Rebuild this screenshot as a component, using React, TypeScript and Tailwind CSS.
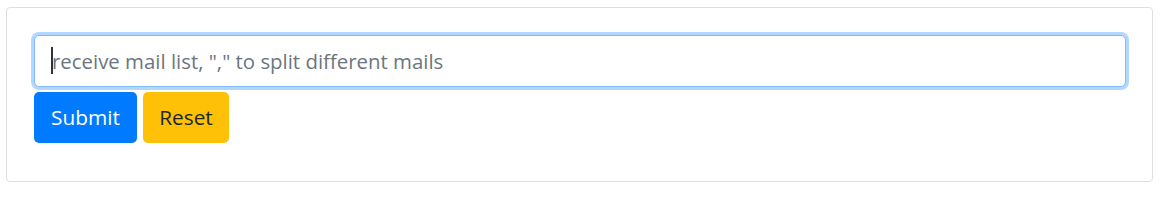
import React from 'react'

const App: React.FC = () => {
  return (
    <div className="w-[1174px] h-[200px] bg-white pt-[7px] pl-[6px]" style={{ fontFamily: '"Open Sans", "Noto Sans", sans-serif' }}>
      <div className="w-[1147px] border border-[#dfdfdf] rounded-[4px] pt-[27px] pb-[38px] px-[27px] flex flex-col gap-[5px]">
        {/* Mail list input, shown focused */}
        <div className="relative w-[1092px]">
          <input
            autoFocus
            type="text"
            placeholder={'receive mail list, "," to split different mails'}
            className="w-full h-[52px] rounded-[5px] border border-[#80bdff] shadow-[0_0_0_3px_rgba(0,123,255,0.3)] px-[17px] text-[20.4px] text-[#495057] placeholder:text-[#6c757d] outline-none bg-white"
          />
          {/* caret */}
          <span className="absolute left-[17px] top-[12px] w-[1.5px] h-[27px] bg-[#333]" />
        </div>
        <div className="flex gap-[6px]">
          <button className="h-[51px] w-[103px] rounded-[5px] bg-[#007bff] text-white text-[20.8px]">Submit</button>
          <button className="h-[51px] w-[86px] rounded-[5px] bg-[#ffc107] text-[#212529] text-[20.8px]">Reset</button>
        </div>
      </div>
    </div>
  )
}

export default App
